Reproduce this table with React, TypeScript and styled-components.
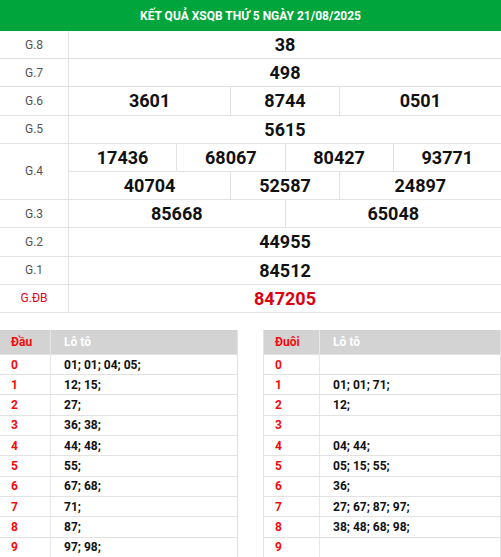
import React from "react";
import styled, { createGlobalStyle } from "styled-components";

const Global = createGlobalStyle`
  html, body { margin: 0; padding: 0; background: #fff; }
  body { font-family: Roboto, "Liberation Sans", Arial, sans-serif; }
  * { box-sizing: border-box; }
`;

const Page = styled.div`
  width: 501px;
  overflow: hidden;
`;

const Title = styled.div`
  height: 31px;
  background: #00a53b;
  color: #fff;
  font-weight: 700;
  font-size: 12px;
  display: flex;
  align-items: center;
  justify-content: center;
  padding-top: 1px;
`;

const Results = styled.div`
  display: flex;
  flex-direction: column;
`;

const PrizeRow = styled.div`
  display: flex;
  border-bottom: 1px solid #e2e2e2;
`;

const Label = styled.div<{ $special?: boolean }>`
  width: 69px;
  flex: none;
  border-right: 1px solid #e2e2e2;
  display: flex;
  align-items: center;
  justify-content: center;
  font-size: 12px;
  color: ${(p) => (p.$special ? "#e0001b" : "#555")};
`;

const Lines = styled.div`
  flex: 1;
  display: flex;
  flex-direction: column;
`;

const Line = styled.div`
  display: flex;
  & + & { border-top: 1px solid #e2e2e2; }
`;

const Num = styled.div<{ $grow: number; $special?: boolean }>`
  flex: ${(p) => p.$grow} 1 0;
  height: 27.2px;
  display: flex;
  align-items: center;
  justify-content: center;
  font-size: 18px;
  font-weight: 700;
  color: ${(p) => (p.$special ? "#d9000f" : "#111")};
  & + & { border-left: 1px solid #e2e2e2; }
`;

const LotoWrap = styled.div`
  display: flex;
  justify-content: space-between;
  margin-top: 17px;
`;

const Loto = styled.div`
  width: 47.5%;
  border-left: 1px solid #e2e2e2;
  border-right: 1px solid #e2e2e2;
  &:first-child { border-left: none; }
`;

const LotoRow = styled.div<{ $head?: boolean }>`
  display: flex;
  height: ${(p) => (p.$head ? "25px" : "20.3px")};
  background: ${(p) => (p.$head ? "#d3d3d3" : "#fff")};
  border-bottom: 1px solid #e2e2e2;
  font-size: 12px;
  font-weight: 700;
`;

const Key = styled.div<{ $w: number }>`
  width: ${(p) => p.$w}px;
  flex: none;
  color: #f50a0a;
  padding-left: 11px;
  display: flex;
  align-items: center;
  border-right: 1px solid #e8e8e8;
`;

const Vals = styled.div<{ $head?: boolean }>`
  flex: 1;
  padding-left: 13px;
  display: flex;
  align-items: center;
  color: ${(p) => (p.$head ? "#fff" : "#111")};
`;

type Prize = { label: string; lines: { n: string; g: number }[][]; special?: boolean };

const prizes: Prize[] = [
  { label: "G.8", lines: [[{ n: "38", g: 1 }]] },
  { label: "G.7", lines: [[{ n: "498", g: 1 }]] },
  { label: "G.6", lines: [[{ n: "3601", g: 3 }, { n: "8744", g: 2 }, { n: "0501", g: 3 }]] },
  { label: "G.5", lines: [[{ n: "5615", g: 1 }]] },
  {
    label: "G.4",
    lines: [
      [{ n: "17436", g: 2 }, { n: "68067", g: 2 }, { n: "80427", g: 2 }, { n: "93771", g: 2 }],
      [{ n: "40704", g: 3 }, { n: "52587", g: 2 }, { n: "24897", g: 3 }],
    ],
  },
  { label: "G.3", lines: [[{ n: "85668", g: 1 }, { n: "65048", g: 1 }]] },
  { label: "G.2", lines: [[{ n: "44955", g: 1 }]] },
  { label: "G.1", lines: [[{ n: "84512", g: 1 }]] },
  { label: "G.ĐB", lines: [[{ n: "847205", g: 1 }]], special: true },
];

const dau = ["01; 01; 04; 05;", "12; 15;", "27;", "36; 38;", "44; 48;", "55;", "67; 68;", "71;", "87;", "97; 98;"];
const duoi = ["", "01; 01; 71;", "12;", "", "04; 44;", "05; 15; 55;", "36;", "27; 67; 87; 97;", "38; 48; 68; 98;", ""];

function LotoTable({ head, rows, w }: { head: string; rows: string[]; w: number }) {
  return (
    <Loto>
      <LotoRow $head>
        <Key $w={w}>{head}</Key>
        <Vals $head>Lô tô</Vals>
      </LotoRow>
      {rows.map((r, i) => (
        <LotoRow key={i}>
          <Key $w={w}>{i}</Key>
          <Vals>{r}</Vals>
        </LotoRow>
      ))}
    </Loto>
  );
}

export default function App() {
  return (
    <Page>
      <Global />
      <Title>KẾT QUẢ XSQB THỨ 5 NGÀY 21/08/2025</Title>
      <Results>
        {prizes.map((p) => (
          <PrizeRow key={p.label}>
            <Label $special={p.special}>{p.label}</Label>
            <Lines>
              {p.lines.map((line, li) => (
                <Line key={li}>
                  {line.map((c) => (
                    <Num key={c.n} $grow={c.g} $special={p.special}>
                      {c.n}
                    </Num>
                  ))}
                </Line>
              ))}
            </Lines>
          </PrizeRow>
        ))}
      </Results>
      <LotoWrap>
        <LotoTable head="Đầu" rows={dau} w={51} />
        <LotoTable head="Đuôi" rows={duoi} w={56} />
      </LotoWrap>
    </Page>
  );
}
